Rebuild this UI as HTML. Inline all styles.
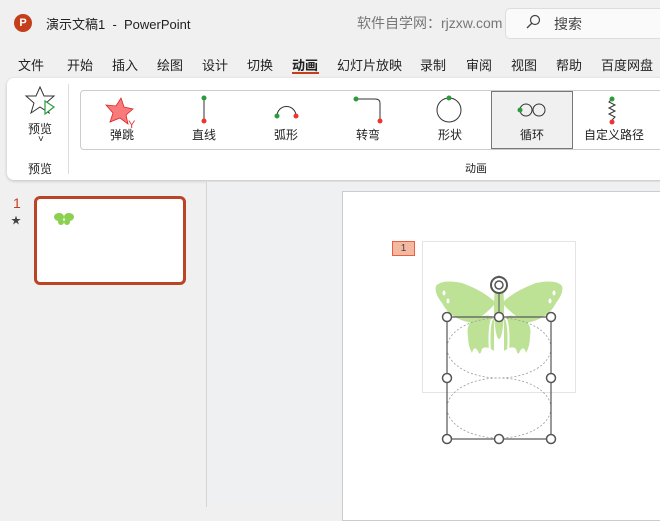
<!DOCTYPE html>
<html><head><meta charset="utf-8"><style>
*{margin:0;padding:0;box-sizing:border-box}
body{width:660px;height:507px;background:#f0f0f0;font-family:"Liberation Sans","Noto Sans CJK SC",sans-serif;color:#222;position:relative;overflow:hidden;font-size:13px}
.a{position:absolute;white-space:nowrap}
.tab{position:absolute;top:55px;font-size:13px;color:#222}
.g{position:absolute;top:126px;font-size:12px;color:#222;text-align:center;width:80px}
</style></head><body>
<div class="a" style="left:14px;top:14px;width:18px;height:18px;border-radius:50%;background:#c43e1c;color:#fff;font-size:11px;font-weight:bold;text-align:center;line-height:18px">P</div>
<div class="a" style="left:46px;top:14px;font-size:13px">演示文稿1 &nbsp;- &nbsp;PowerPoint</div>
<div class="a" style="left:357px;top:13px;font-size:14px;color:#777">软件自学网：rjzxw.com</div>
<div class="a" style="left:505px;top:8px;width:160px;height:31px;background:#fafafa;border:1px solid #ddd;border-radius:5px"></div>
<svg class="a" style="left:525px;top:14px" width="16" height="16"><circle cx="10" cy="6" r="4.5" fill="none" stroke="#444" stroke-width="1.2"/><line x1="7" y1="9" x2="2" y2="14" stroke="#444" stroke-width="1.3"/></svg>
<div class="a" style="left:554px;top:14px;font-size:14px;color:#444">搜索</div>
<div class="tab" style="left:18px">文件</div><div class="tab" style="left:67px">开始</div><div class="tab" style="left:112px">插入</div><div class="tab" style="left:157px">绘图</div><div class="tab" style="left:202px">设计</div><div class="tab" style="left:247px">切换</div><div class="tab" style="left:292px;font-weight:bold">动画</div><div class="tab" style="left:337px">幻灯片放映</div><div class="tab" style="left:420px">录制</div><div class="tab" style="left:466px">审阅</div><div class="tab" style="left:511px">视图</div><div class="tab" style="left:556px">帮助</div><div class="tab" style="left:601px">百度网盘</div>
<div class="a" style="left:292px;top:72px;width:27px;height:2px;background:#c43e1c"></div>
<div class="a" style="left:7px;top:78px;width:670px;height:102px;background:#fff;border-radius:7px;box-shadow:0 1px 3px rgba(0,0,0,.2)"></div>
<svg class="a" style="left:24px;top:86px" width="36" height="30"><polygon points="16,1 20,10 30,10 22,17 25,27 16,21 7,27 10,17 2,10 12,10" fill="none" stroke="#333" stroke-width="1"/><polygon points="21,15 30,21 21,28" fill="#fff" stroke="#2a9d3a" stroke-width="1.2"/></svg>
<div class="a" style="left:28px;top:120px;font-size:12px">预览</div>
<div class="a" style="left:38px;top:134px;font-size:10px">˅</div>
<div class="a" style="left:28px;top:160px;font-size:12px">预览</div>
<div class="a" style="left:68px;top:84px;width:1px;height:90px;background:#ddd"></div>
<div class="a" style="left:80px;top:90px;width:600px;height:60px;border:1px solid #ccc;border-radius:4px"></div>
<div class="a" style="left:491px;top:91px;width:82px;height:58px;background:#f0f0f0;border:1px solid #777"></div>
<svg class="a" style="left:80px;top:90px" width="580" height="40">
<polygon points="41,8 44,17 53,19 46,25 48,34 40,28 30,32 33,23 26,15 36,16" fill="#f87a7a" stroke="#d22" stroke-width="0.8"/><text x="48" y="38" fill="#e33" font-size="11" font-family="Liberation Sans">Y</text>
<line x1="124" y1="8" x2="124" y2="31" stroke="#333"/><circle cx="124" cy="8" r="2.5" fill="#2a9d3a"/><circle cx="124" cy="31" r="2.5" fill="#e33"/>
<path d="M197,26 A9.5,9.5 0 0 1 216,26" fill="none" stroke="#333"/><circle cx="197" cy="26" r="2.5" fill="#2a9d3a"/><circle cx="216" cy="26" r="2.5" fill="#e33"/>
<path d="M276,9 H295 Q300,9 300,13 V31" fill="none" stroke="#333"/><circle cx="276" cy="9" r="2.5" fill="#2a9d3a"/><circle cx="300" cy="31" r="2.5" fill="#e33"/>
<circle cx="369" cy="20" r="12" fill="none" stroke="#333"/><circle cx="369" cy="8" r="2.5" fill="#2a9d3a"/>
<circle cx="446" cy="20" r="6" fill="none" stroke="#333"/><circle cx="459" cy="20" r="6" fill="none" stroke="#333"/><circle cx="440" cy="20" r="2.5" fill="#2a9d3a"/>
<path d="M532,9 l-3,3 6,3 -6,3 6,3 -6,3 6,3 -3,3" fill="none" stroke="#333"/><circle cx="532" cy="9" r="2.5" fill="#2a9d3a"/><circle cx="532" cy="32" r="2.5" fill="#e33"/>
</svg>
<div class="g" style="left:82px">弹跳</div><div class="g" style="left:164px">直线</div><div class="g" style="left:246px">弧形</div><div class="g" style="left:328px">转弯</div><div class="g" style="left:410px">形状</div><div class="g" style="left:492px">循环</div><div class="g" style="left:574px">自定义路径</div>
<div class="a" style="left:465px;top:160px;font-size:11px">动画</div>
<div class="a" style="left:206px;top:182px;width:1px;height:325px;background:#d4d4d4"></div>
<div class="a" style="left:207px;top:182px;width:453px;height:325px;background:#eff0f1"></div>
<div class="a" style="left:13px;top:195px;font-size:14px;color:#c43e1c">1</div>
<div class="a" style="left:11px;top:212px;font-size:10px;color:#444">★</div>
<div class="a" style="left:34px;top:196px;width:152px;height:89px;background:#fff;border:3px solid #bb4426;border-radius:6px"></div>
<svg class="a" style="left:53px;top:212px" width="22" height="14"><ellipse cx="6" cy="5" rx="5" ry="4" fill="#8cd050"/><ellipse cx="16" cy="5" rx="5" ry="4" fill="#8cd050"/><ellipse cx="8" cy="10" rx="3" ry="3" fill="#8cd050"/><ellipse cx="14" cy="10" rx="3" ry="3" fill="#8cd050"/></svg>
<div class="a" style="left:342px;top:191px;width:330px;height:330px;background:#fff;border:1px solid #ccc"></div>
<div class="a" style="left:392px;top:241px;width:23px;height:15px;background:#f4b9a0;border:1px solid #e86040;font-size:10px;text-align:center;line-height:13px;color:#444">1</div>
<div class="a" style="left:422px;top:241px;width:154px;height:152px;border:1px solid #e4e4e4"></div>
<svg class="a" style="left:422px;top:241px" width="240" height="266">
<g fill="#bde296">
<path d="M14,45 Q20,38 40,42 Q62,50 74,62 Q62,75 50,82 Q28,78 20,62 Q12,52 14,45Z"/>
<path d="M140,45 Q134,38 114,42 Q92,50 80,62 Q92,75 104,82 Q126,78 134,62 Q142,52 140,45Z"/>
<path d="M50,80 Q62,72 72,76 L72,110 Q64,104 60,108 Q58,116 56,110 Q52,104 50,112 Q46,105 46,95 Q44,85 50,80Z"/>
<path d="M104,80 Q92,72 82,76 L82,110 Q90,104 94,108 Q96,116 98,110 Q102,104 104,112 Q108,105 108,95 Q110,85 104,80Z"/>
<ellipse cx="77" cy="66" rx="5" ry="32"/>
</g>
<path d="M72,75 Q66,80 68,112 M82,75 Q88,80 86,112" stroke="#fff" stroke-width="2" fill="none"/>
<g fill="#fff"><ellipse cx="22" cy="52" rx="1.5" ry="2.5"/><ellipse cx="26" cy="60" rx="1.5" ry="2.5"/><ellipse cx="132" cy="52" rx="1.5" ry="2.5"/><ellipse cx="128" cy="60" rx="1.5" ry="2.5"/></g>
<g fill="none" stroke="#999" stroke-dasharray="2,2" stroke-width="0.8"><ellipse cx="77" cy="107" rx="52" ry="30"/><ellipse cx="77" cy="167" rx="52" ry="30"/></g>
<rect x="25" y="76" width="104" height="122" fill="none" stroke="#555" stroke-width="1.2"/>
<line x1="77" y1="76" x2="77" y2="50" stroke="#555"/>
<circle cx="77" cy="44" r="8" fill="#fff" stroke="#555" stroke-width="2"/><circle cx="77" cy="44" r="4" fill="none" stroke="#555" stroke-width="1.5"/>
<g fill="#fff" stroke="#555" stroke-width="1.5">
<circle cx="25" cy="76" r="4.5"/><circle cx="77" cy="76" r="4.5"/><circle cx="129" cy="76" r="4.5"/>
<circle cx="25" cy="137" r="4.5"/><circle cx="129" cy="137" r="4.5"/>
<circle cx="25" cy="198" r="4.5"/><circle cx="77" cy="198" r="4.5"/><circle cx="129" cy="198" r="4.5"/>
</g>
</svg>
</body></html>
